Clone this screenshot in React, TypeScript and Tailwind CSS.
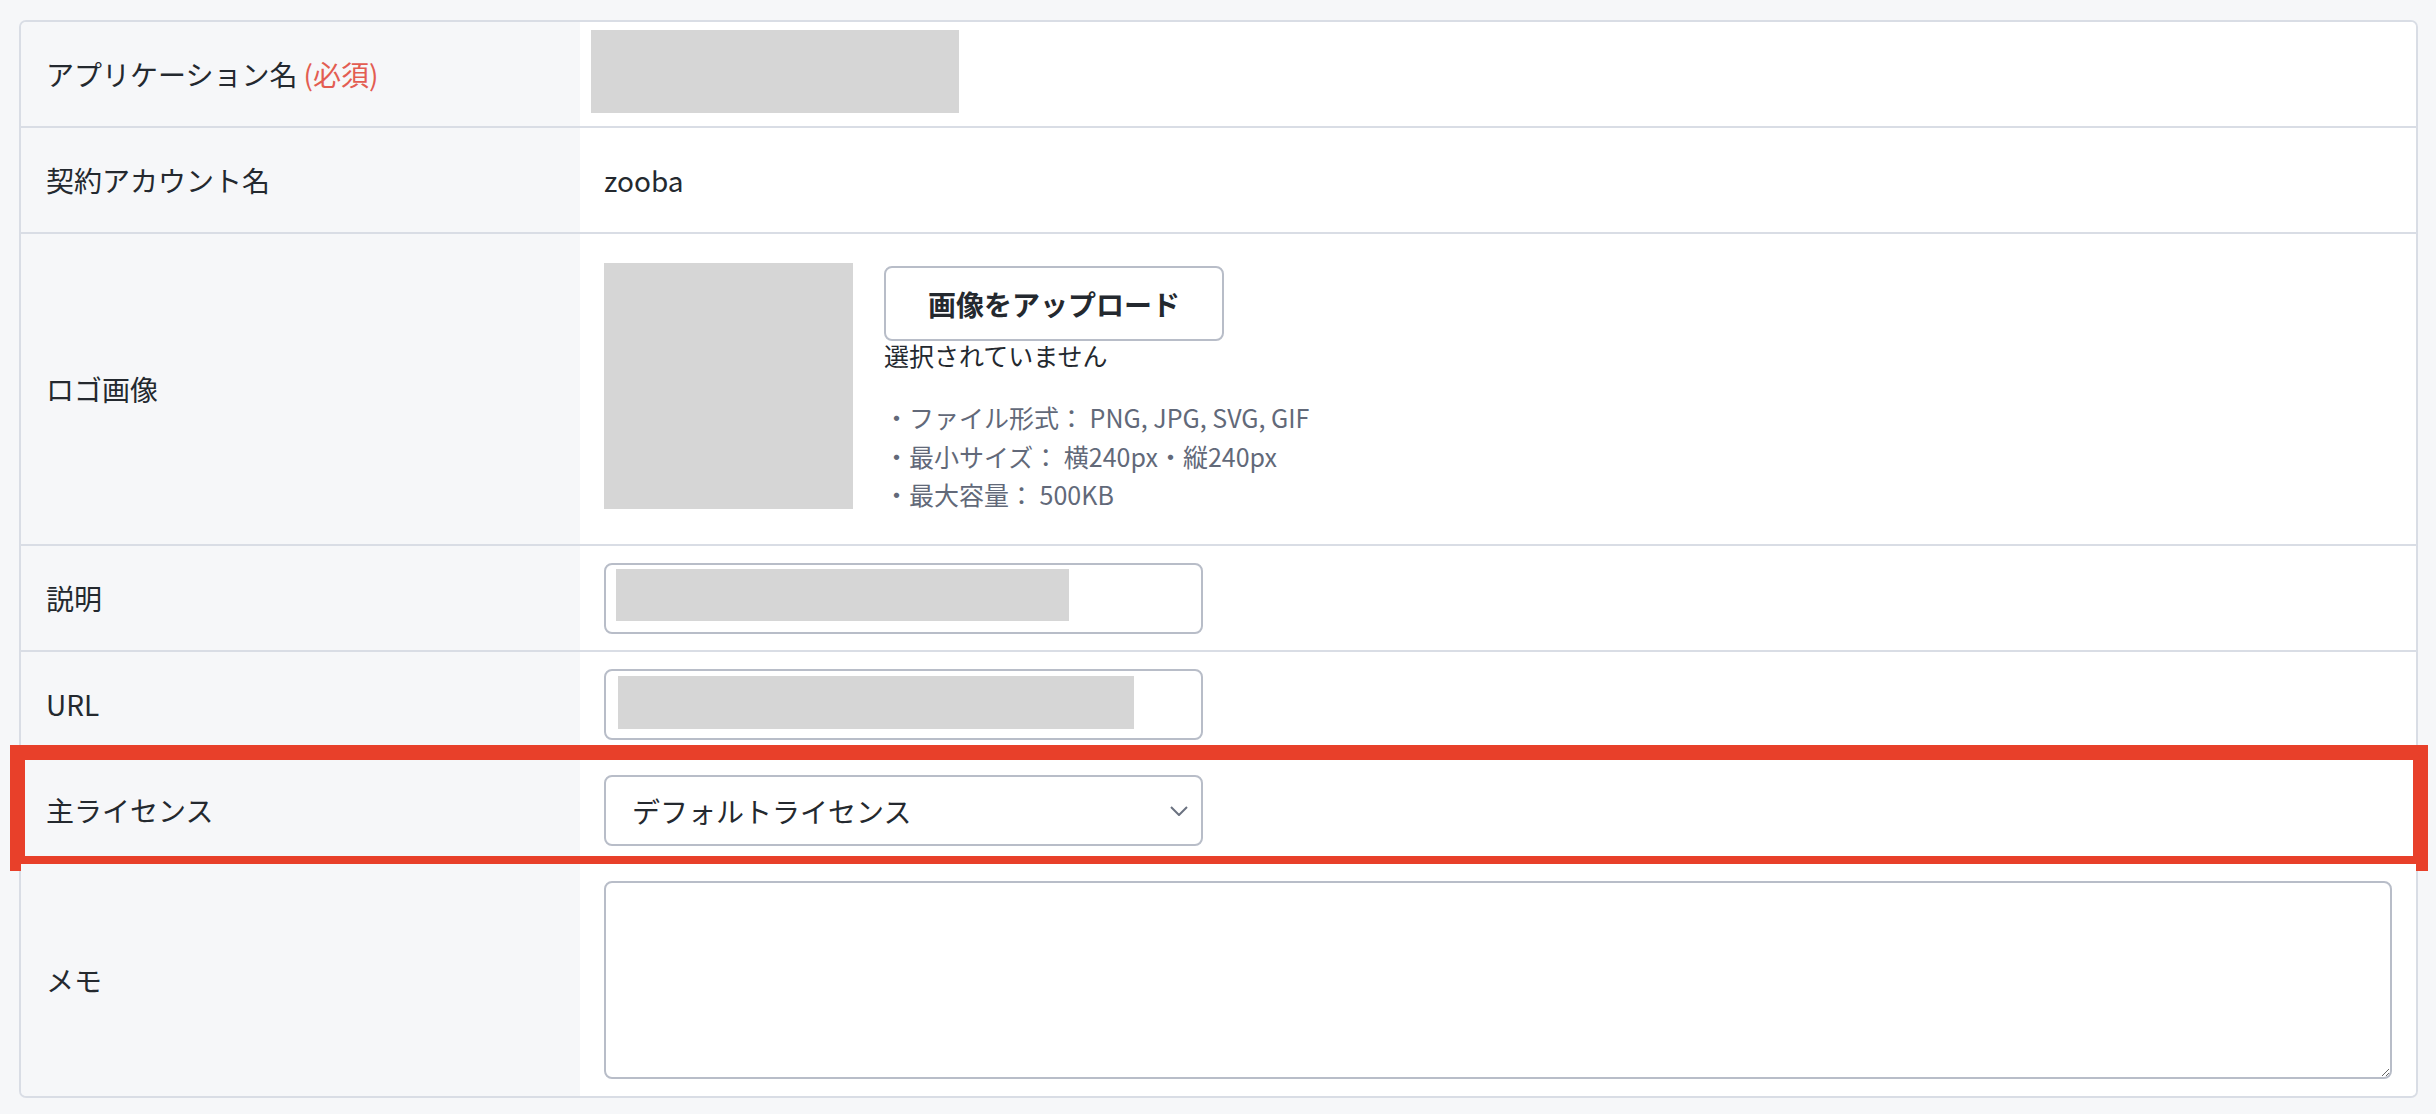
import type { ReactNode } from "react";

const font = { fontFamily: '"Noto Sans CJK JP", "Noto Sans", sans-serif' };

function Row({
  label,
  children,
  last,
  className = "",
  labelClass = "",
  highlight,
}: {
  label: ReactNode;
  children: ReactNode;
  last?: boolean;
  className?: string;
  labelClass?: string;
  highlight?: boolean;
}) {
  return (
    <div
      className={`relative grid grid-cols-[559px_1fr] ${last ? "" : "border-b-2 border-[#d9dde5]"}`}
    >
      <div className={`flex items-center bg-[#f6f7f9] pl-[25px] text-[28px] text-[#24292f] ${labelClass}`}>
        {label}
      </div>
      <div className={`bg-white px-[24px] ${className}`}>{children}</div>
      {highlight && (
        <div className="pointer-events-none absolute -top-[13px] -bottom-[9px] -left-[11px] -right-[12px] border-[15px] border-[#e8402a]" />
      )}
    </div>
  );
}

function Chevron() {
  return (
    <svg width="18" height="10" viewBox="0 0 18 10" fill="none">
      <polyline points="1,1 9,9 17,1" stroke="#6b7280" strokeWidth="2" strokeLinejoin="round" />
    </svg>
  );
}

const boxInput = "h-[71px] w-[599px] rounded-[8px] border-2 border-[#b8bdc8] bg-white";

export default function App() {
  return (
    <div className="min-h-[1114px] bg-[#f6f7f9] pl-[19px] pr-[18px] pt-[20px] pb-[16px]" style={font}>
      <div className="rounded-[7px] border-2 border-[#d9dde5]">
        {/* アプリケーション名 */}
        <Row
          label={
            <>
              アプリケーション名
              <span className="ml-[6px] text-[#e35d52]">(必須)</span>
            </>
          }
          labelClass="rounded-tl-[5px]"
          className="h-[104px] rounded-tr-[5px] pt-[8px] !pl-[11px]"
        >
          <div className="h-[83px] w-[368px] bg-[#d6d6d6]" />
        </Row>

        <Row label="契約アカウント名" className="flex h-[104px] items-center">
          <span className="text-[28px] text-[#24292f]">zooba</span>
        </Row>

        {/* ロゴ画像 */}
        <Row label="ロゴ画像" className="flex h-[310px] items-start gap-[31px] pt-[29px]">
          <div className="h-[246px] w-[249px] bg-[#d6d6d6]" />
          <div className="flex flex-col items-start pt-[3px]">
            <button className="h-[75px] rounded-[8px] border-2 border-[#b8bdc8] bg-white px-[42px] text-[28px] font-bold text-[#24292f]">
              画像をアップロード
            </button>
            <p className="text-[25px] leading-[28px] text-[#24292f]">選択されていません</p>
            <ul className="mt-[29px] text-[25px] leading-[38.5px] text-[#626979]">
              <li>・ファイル形式： PNG, JPG, SVG, GIF</li>
              <li>・最小サイズ： 横240px・縦240px</li>
              <li>・最大容量： 500KB</li>
            </ul>
          </div>
        </Row>

        <Row label="説明" className="pt-[17px] pb-[16px]">
          <div className={`${boxInput} pl-[10px] pt-[4px]`}>
            <div className="h-[52px] w-[453px] bg-[#d6d6d6]" />
          </div>
        </Row>

        <Row label="URL" className="pt-[17px] pb-[16px]">
          <div className={`${boxInput} pl-[12px] pt-[5px]`}>
            <div className="h-[53px] w-[516px] bg-[#d6d6d6]" />
          </div>
        </Row>

        <Row label="主ライセンス" className="pt-[17px] pb-[16px]" highlight>
          <div className={`${boxInput} flex items-center justify-between pl-[26px] pr-[13px]`}>
            <span className="text-[28px] text-[#24292f]">デフォルトライセンス</span>
            <Chevron />
          </div>
        </Row>

        <Row label="メモ" labelClass="rounded-bl-[5px]" className="rounded-br-[5px] pt-[17px] pb-[17px]" last>
          <textarea className="block h-[198px] w-full rounded-[8px] border-2 border-[#b8bdc8] bg-white p-3 text-[28px] outline-none" />
        </Row>
      </div>
    </div>
  );
}
